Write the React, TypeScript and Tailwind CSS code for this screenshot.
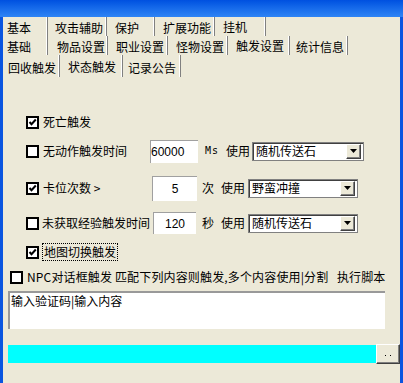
import React from 'react';

type TabDef = { label: string; w: string; pl: string; active?: boolean };

const row1: TabDef[] = [
  { label: '基本', w: 'w-[45px]', pl: 'pl-[4px]' },
  { label: '攻击辅助', w: 'w-[59px]', pl: 'pl-[7px]' },
  { label: '保护', w: 'w-[48px]', pl: 'pl-[8px]' },
  { label: '扩展功能', w: 'w-[60px]', pl: 'pl-[8px]' },
  { label: '挂机', w: 'w-[51px]', pl: 'pl-[8px]', active: true },
];

const row2: TabDef[] = [
  { label: '基础', w: 'w-[45px]', pl: 'pl-[4px]' },
  { label: '物品设置', w: 'w-[60px]', pl: 'pl-[9px]' },
  { label: '职业设置', w: 'w-[60px]', pl: 'pl-[8px]' },
  { label: '怪物设置', w: 'w-[60px]', pl: 'pl-[8px]' },
  { label: '触发设置', w: 'w-[62px]', pl: 'pl-[8px]', active: true },
  { label: '统计信息', w: 'w-[58px]', pl: 'pl-[6px]' },
];

const row3: TabDef[] = [
  { label: '回收触发', w: 'w-[57px]', pl: 'pl-[5px]' },
  { label: '状态触发', w: 'w-[63px]', pl: 'pl-[8px]', active: true },
  { label: '记录公告', w: 'w-[58px]', pl: 'pl-[5px]' },
];

const TabRow = ({ tabs, h }: { tabs: TabDef[]; h: string }) => (
  <div className={`flex ${h}`}>
    {tabs.map((t) => (
      <div
        key={t.label}
        className={`${t.w} ${t.pl} flex items-center border-r border-[#808080] shadow-[inset_-1px_0_0_#ffffff] ${
          t.active ? 'pt-px' : 'pt-[3px]'
        }`}
      >
        <span className="text-[12px] leading-none text-black whitespace-nowrap">{t.label}</span>
      </div>
    ))}
  </div>
);

const CheckBox = ({ checked }: { checked?: boolean }) => (
  <span className="w-[13px] h-[13px] border-2 border-black bg-white flex items-center justify-center shrink-0">
    {checked && (
      <svg width="9" height="9" viewBox="0 0 9 9">
        <path d="M1.5 4 L3.5 6.2 L7.8 1.5" stroke="black" strokeWidth="2" fill="none" />
      </svg>
    )}
  </span>
);

const DropBtn = () => (
  <span className="w-[15px] h-[15px] bg-[#ECE9D8] border border-t-white border-l-white border-r-[#404040] border-b-[#404040] shadow-[inset_-1px_-1px_0_#808080] flex items-center justify-center shrink-0">
    <svg width="7" height="4" viewBox="0 0 7 4">
      <path d="M0 0 H7 L3.5 4 Z" fill="black" />
    </svg>
  </span>
);

const Select = ({ value, w }: { value: string; w: string }) => (
  <div className={`${w} h-[19px] border border-[#808080] shadow-[inset_1px_1px_0_#404040] bg-white flex items-center pl-[3px] pr-[2px]`}>
    <span className="flex-1 text-[12px] leading-none whitespace-nowrap">{value}</span>
    <DropBtn />
  </div>
);

const Input = ({ value, w, h, center }: { value: string; w: string; h: string; center?: boolean }) => (
  <div
    className={`${w} ${h} bg-white border-t border-l border-[#a0a0a0] flex items-center ${
      center ? 'justify-center' : 'justify-start'
    } text-[12px] leading-none font-['Liberation_Sans',sans-serif] shrink-0`}
  >
    {value}
  </div>
);

export default function App() {
  return (
    <div className="w-[403px] h-[383px] overflow-hidden bg-[#ECE9D8] flex flex-col font-['Noto_Sans_CJK_SC','Noto_Sans',sans-serif] text-black">
      {/* title bar strip */}
      <div className="h-[17px] shrink-0 bg-gradient-to-b from-[#0050E0] to-[#2E84F5]" />

      <div className="flex flex-1 min-h-0">
        <div className="w-[3px] bg-[#0A55E0] shrink-0" />

        <div className="flex-1 flex flex-col">
          <TabRow tabs={row1} h="h-[19px]" />
          <TabRow tabs={row2} h="h-[19px]" />
          <TabRow tabs={row3} h="h-[22px]" />

          <div className="flex flex-col text-[12px] leading-none">
            {/* 死亡触发 */}
            <div className="h-[24px] mt-[33px] pl-[23px] flex items-center">
              <CheckBox checked />
              <span className="ml-[4px]">死亡触发</span>
            </div>

            {/* 无动作触发时间 */}
            <div className="h-[24px] mt-[5px] pl-[23px] flex items-center">
              <CheckBox />
              <span className="ml-[4px] w-[107px] whitespace-nowrap">无动作触发时间</span>
              <Input value="60000" w="w-[48px]" h="h-[23px]" />
              <span className="ml-[7px] text-[10px] font-['DejaVu_Sans_Mono',monospace] tracking-[1px]">Ms</span>
              <span className="ml-[7px]">使用</span>
              <Select value="随机传送石" w="w-[112px] ml-[2px]" />
            </div>

            {/* 卡位次数 */}
            <div className="h-[24px] mt-[13px] pl-[23px] flex items-center">
              <CheckBox checked />
              <span className="ml-[4px] w-[109px] whitespace-nowrap">卡位次数 &gt;</span>
              <Input value="5" w="w-[45px]" h="h-[25px]" center />
              <span className="ml-[5px]">次</span>
              <span className="ml-[7px]">使用</span>
              <Select value="野蛮冲撞" w="w-[110px] ml-[3px]" />
            </div>

            {/* 未获取经验触发时间 */}
            <div className="h-[24px] mt-[11px] pl-[23px] flex items-center">
              <CheckBox />
              <span className="ml-[3px] w-[111px] whitespace-nowrap">未获取经验触发时间</span>
              <Input value="120" w="w-[43px]" h="h-[22px]" center />
              <span className="ml-[6px]">秒</span>
              <span className="ml-[7px]">使用</span>
              <Select value="随机传送石" w="w-[110px] ml-[3px]" />
            </div>

            {/* 地图切换触发 */}
            <div className="h-[24px] mt-[5px] pl-[23px] flex items-center">
              <CheckBox checked />
              <span className="ml-[3px] px-px py-[2px] border border-dotted border-black">地图切换触发</span>
            </div>

            {/* NPC */}
            <div className="h-[20px] mt-[3px] pl-[7px] flex items-center whitespace-nowrap">
              <CheckBox />
              <span className="ml-[4px] tracking-[0.15px]">NPC对话框触发 匹配下列内容则触发,多个内容使用|分割&nbsp;&nbsp;&nbsp;执行脚本</span>
            </div>

            {/* textarea */}
            <div className="pl-[5px] mt-[4px]">
              <div className="w-[377px] h-[38px] bg-white border-t-2 border-l-2 border-t-[#999999] border-l-[#999999] pl-[1px] pt-[2px]">
                输入验证码|输入内容
              </div>
            </div>

            {/* bar */}
            <div className="pl-[5px] mt-[15px] flex items-start">
              <div className="w-[368px] h-[18px] mt-px bg-[#00FFFF]" />
              <div className="w-[24px] h-[20px] bg-[#ECE9D8] border border-t-white border-l-white border-r-[#404040] border-b-[#404040] shadow-[inset_-1px_-1px_0_#808080] flex items-center justify-center gap-[4px] pt-[3px]">
                <span className="w-px h-px bg-black" />
                <span className="w-px h-px bg-black" />
              </div>
            </div>
          </div>
        </div>

        <div className="w-[3px] bg-[#0A55E0] shrink-0" />
      </div>
    </div>
  );
}
